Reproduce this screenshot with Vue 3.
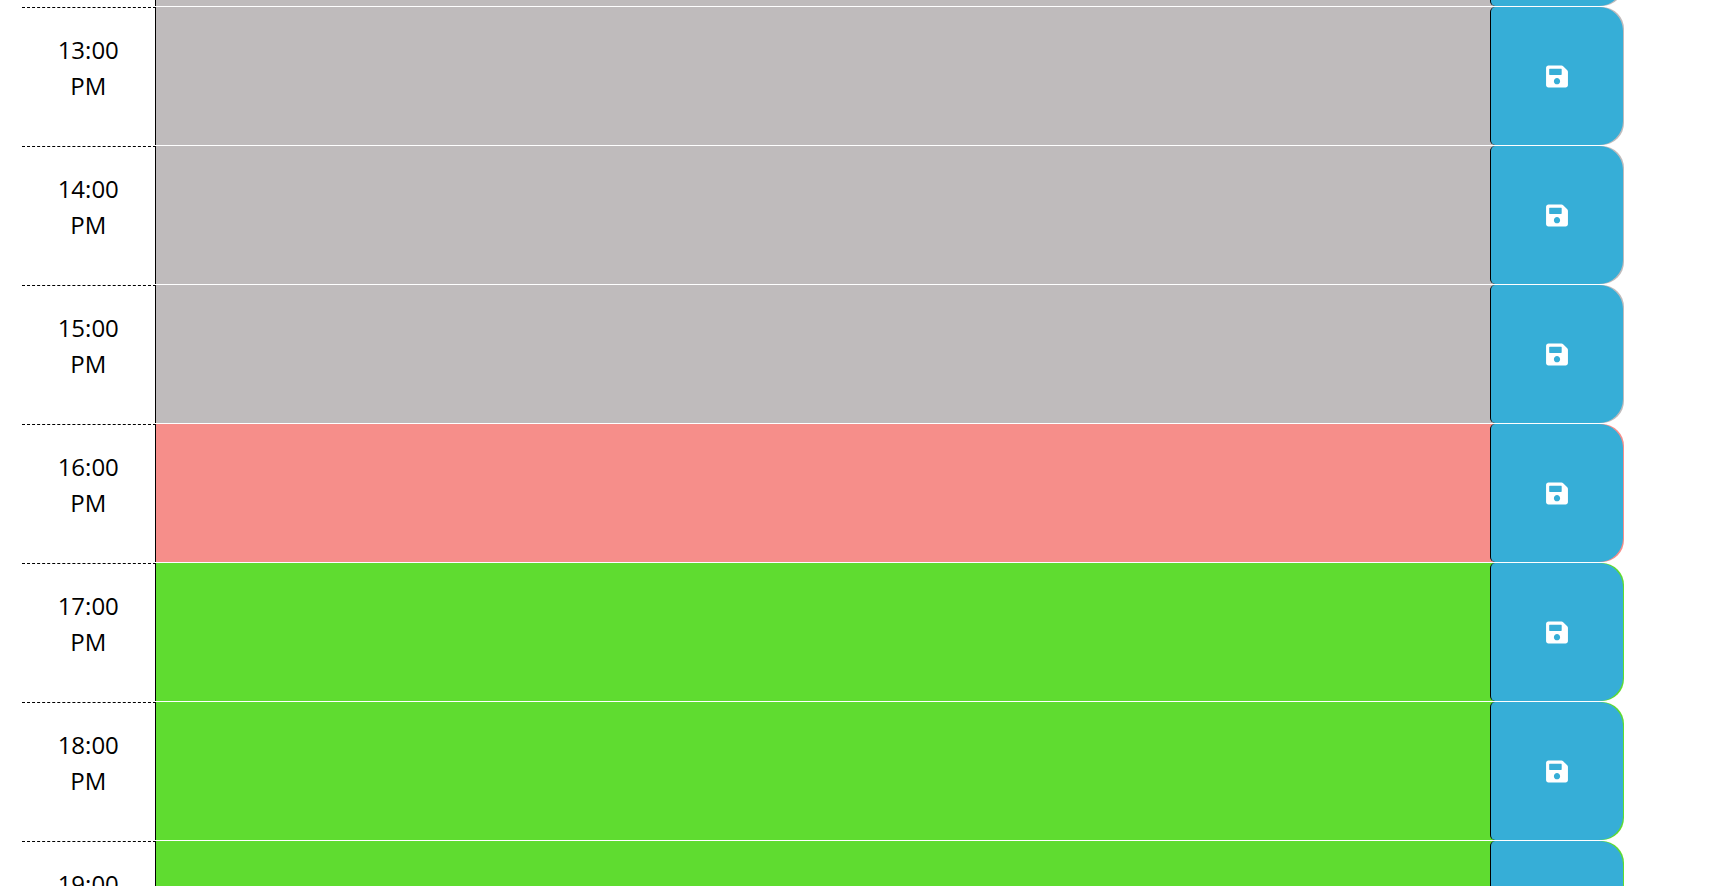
<script setup>
import { ref } from 'vue'

const blocks = ref([
  { hour: '12:00', state: 'past', note: '' },
  { hour: '13:00', state: 'past', note: '' },
  { hour: '14:00', state: 'past', note: '' },
  { hour: '15:00', state: 'past', note: '' },
  { hour: '16:00', state: 'present', note: '' },
  { hour: '17:00', state: 'future', note: '' },
  { hour: '18:00', state: 'future', note: '' },
  { hour: '19:00', state: 'future', note: '' }
])
</script>

<template>
  <main class="planner">
    <div class="schedule">
      <form
        v-for="block in blocks"
        :key="block.hour"
        class="time-block"
        :class="block.state"
        @submit.prevent
      >
        <label class="hour" :for="'note-' + block.hour">{{ block.hour }} PM</label>
        <textarea :id="'note-' + block.hour" v-model="block.note" class="note"></textarea>
        <button class="save" type="submit" aria-label="Save">
          <svg class="icon" viewBox="0 0 448 512" aria-hidden="true">
            <path
              fill="currentColor"
              d="M433.941 129.941l-83.882-83.882A48 48 0 0 0 316.118 32H48C21.49 32 0 53.49 0 80v352c0 26.51 21.49 48 48 48h352c26.51 0 48-21.49 48-48V163.882a48 48 0 0 0-14.059-33.941zM224 416c-35.346 0-64-28.654-64-64 0-35.346 28.654-64 64-64s64 28.654 64 64c0 35.346-28.654 64-64 64zm96-304.52V212c0 6.627-5.373 12-12 12H76c-6.627 0-12-5.373-12-12V108c0-6.627 5.373-12 12-12h228.52c3.183 0 6.235 1.264 8.485 3.515l3.48 3.48A11.996 11.996 0 0 1 320 111.48z"
            />
          </svg>
        </button>
      </form>
    </div>
  </main>
</template>

<style>
body {
  margin: 0;
  background: #fff;
}
</style>

<style scoped>
.planner {
  height: 100vh;
  overflow: hidden;
  font-family: "Open Sans", "Noto Sans", sans-serif;
  font-size: 24px;
  line-height: 36px;
  color: #000;
}

/* The list is scrolled so that the noon block is almost out of view. */
.schedule {
  display: grid;
  gap: 1px;
  margin-top: -132px;
  padding: 0 95px 0 22px;
}

.time-block {
  display: grid;
  grid-template-columns: minmax(0, 1fr) minmax(0, 10fr) minmax(0, 1fr);
  min-height: 138px;
  border-radius: 0 22px 22px 0;
}

.past {
  background: #bfbbbc;
}

.present {
  background: #f68e8a;
}

.future {
  background: #5fdc30;
}

.hour {
  box-sizing: border-box;
  padding: 24px 30px;
  border-top: 1px dashed #000;
  border-right: 1px solid #000;
  background: #fff;
  text-align: center;
}

.note {
  box-sizing: border-box;
  width: 100%;
  margin: 0;
  padding: 8px 16px;
  border: 0;
  outline: 0;
  background: transparent;
  color: #000;
  font: inherit;
  resize: none;
}

/* Leaves a thin edge of the block's colour on the right. */
.save {
  display: flex;
  align-items: center;
  justify-content: center;
  margin: 0 1px 0 -1px;
  padding: 0;
  border: 0;
  border-left: 1px solid #000;
  border-radius: 5px 24px 24px 5px;
  background: #36aed7;
  color: #fff;
  cursor: pointer;
}

.icon {
  width: 22px;
  height: 25px;
}
</style>
